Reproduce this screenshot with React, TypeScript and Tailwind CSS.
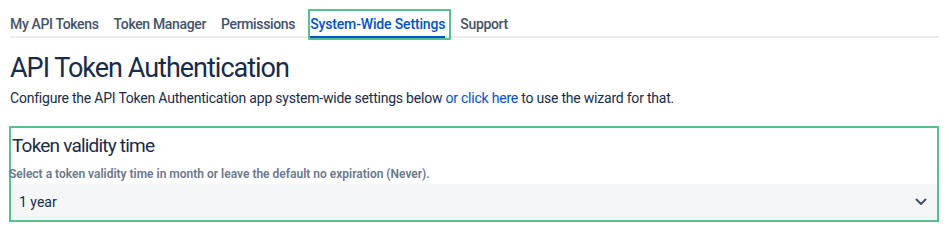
import React from "react";

const tabs = ["My API Tokens", "Token Manager", "Permissions", "System-Wide Settings", "Support"];

const ChevronDown = () => (
    <svg width="12" height="8" viewBox="0 0 12 8" fill="none">
        <path d="M1.5 1.5L6 6l4.5-4.5" stroke="#42526e" strokeWidth="2" strokeLinecap="round" strokeLinejoin="round" />
    </svg>
);

const App = () => {
    const active = "System-Wide Settings";

    return (
        <div className="w-[949px] h-[246px] bg-white pl-[10px] pr-[10px] font-['Roboto',sans-serif] text-[#172b4d]">
            {/* tab bar */}
            <div className="flex gap-[15px] border-b-2 border-[#ebecf0] pt-[14px]">
                {tabs.map((tab) =>
                    tab === active ? (
                        <div
                            key={tab}
                            className="relative pb-[2px] -mb-[2px] border-b-2 border-[#0052cc] text-[14px] leading-5 font-medium tracking-[-0.15px] text-[#0052cc]"
                        >
                            {tab}
                            {/* highlight marker */}
                            <span className="absolute -left-[2px] -right-[6px] -top-[5px] -bottom-[4px] border-2 border-[#52c38f] rounded-[1px]" />
                        </div>
                    ) : (
                        <div
                            key={tab}
                            className="pb-[2px] text-[14px] leading-5 font-medium tracking-[-0.35px] text-[#42526e]"
                        >
                            {tab}
                        </div>
                    )
                )}
            </div>

            <h1 className="mt-[14px] text-[27px] leading-8 font-normal tracking-[-1px]">
                API Token Authentication
            </h1>
            <p className="mt-[4px] text-[14px] leading-5 tracking-[-0.22px] text-[#172b4d]">
                Configure the API Token Authentication app system-wide settings below{" "}
                <a className="text-[#0052cc]">or click here</a> to use the wizard for that.
            </p>

            {/* highlighted settings block */}
            <section className="mt-[18px] border-2 border-[#52c38f] w-[930px] -ml-px">
                <h2 className="pl-[1px] pt-[6px] text-[19px] leading-6 font-normal tracking-[-0.8px]">
                    Token validity time
                </h2>
                <p className="-ml-[2px] mt-[8px] text-[12px] leading-4 font-semibold text-[#6b778c]">
                    Select a token validity time in month or leave the default no expiration (Never).
                </p>
                <div className="mt-[2px] h-[36px] bg-[#f4f5f7] flex items-center justify-between pl-[8px] pr-[10px]">
                    <span className="text-[14px] leading-5">1 year</span>
                    <ChevronDown />
                </div>
            </section>
        </div>
    );
};

export default App;
